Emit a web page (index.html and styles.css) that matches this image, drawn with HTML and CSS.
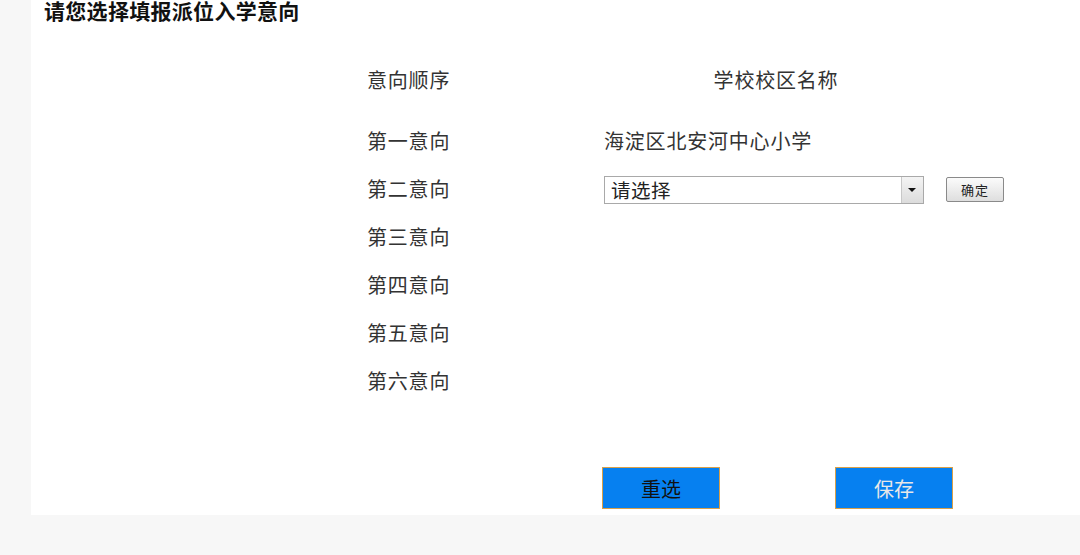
FILE: index.html
```html
<!DOCTYPE html>
<html lang="zh-CN">
<head>
    <meta charset="UTF-8">
    <title>填报派位入学意向</title>
    <link rel="stylesheet" href="styles.css">
</head>
<body>
    <div class="panel">
        <h1 class="title">请您选择填报派位入学意向</h1>

        <div class="choices">
            <div class="row head">
                <div class="col-order">意向顺序</div>
                <div class="col-school center">学校校区名称</div>
            </div>
            <div class="row">
                <div class="col-order">第一意向</div>
                <div class="col-school">海淀区北安河中心小学</div>
            </div>
            <div class="row">
                <div class="col-order">第二意向</div>
                <div class="col-school">
                    <div class="select">
                        <span class="select-text">请选择</span>
                        <span class="select-arrow"></span>
                    </div>
                    <button class="btn-small">确定</button>
                </div>
            </div>
            <div class="row">
                <div class="col-order">第三意向</div>
            </div>
            <div class="row">
                <div class="col-order">第四意向</div>
            </div>
            <div class="row">
                <div class="col-order">第五意向</div>
            </div>
            <div class="row">
                <div class="col-order">第六意向</div>
            </div>

            <div class="actions">
                <button class="btn-main">重选</button>
                <button class="btn-main light">保存</button>
            </div>
        </div>
    </div>
</body>
</html>
```

FILE: styles.css
```css
body { margin: 0; background: #f7f7f7; font-family: "Noto Sans CJK SC", "Noto Sans", sans-serif; color: #333; }
.panel { margin-left: 31px; height: 515px; background: #fff; padding-left: 13px; box-sizing: border-box; overflow: hidden; }
.title { margin: 0; font-size: 21px; line-height: 20px; font-weight: bold; color: #111; letter-spacing: 0.3px; }

.choices { margin-left: 323px; margin-top: 35px; }
.row { display: flex; align-items: center; height: 48px; font-size: 20px; letter-spacing: 0.8px; }
.row.head { margin-bottom: 13px; }
.col-order { width: 237px; }
.col-school { width: 344px; display: flex; align-items: center; flex-shrink: 0; }
.col-school.center { justify-content: center; }

.select { width: 320px; height: 28px; box-sizing: border-box; border: 1px solid #a9a9a9; display: flex; align-items: center; justify-content: space-between; margin: 3px 22px 0 0; flex-shrink: 0; }
.select-text { padding-left: 6px; font-size: 19.5px; color: #222; letter-spacing: 0.5px; }
.select-arrow { width: 21px; height: 26px; border-left: 1px solid #c8c8c8; background: linear-gradient(#f4f4f4, #dcdcdc); position: relative; }
.select-arrow::after { content: ""; position: absolute; left: 6px; top: 11px; border-left: 4px solid transparent; border-right: 4px solid transparent; border-top: 4px solid #111; }

.btn-small { width: 58px; height: 25px; padding: 0; margin-top: 3px; border: 1px solid #8a8a8a; border-radius: 2px; background: linear-gradient(#fbfbfb, #dedede); font-family: inherit; font-size: 13px; color: #222; letter-spacing: 1px; flex-shrink: 0; }

.actions { display: flex; gap: 115px; margin-top: 63px; padding-left: 235px; }
.btn-main { width: 118px; height: 42px; background: #0680f0; border: 1px solid #d8a049; font-family: inherit; font-size: 20px; color: #111; padding: 0; }
.btn-main.light { color: #e8e8e8; }
```
